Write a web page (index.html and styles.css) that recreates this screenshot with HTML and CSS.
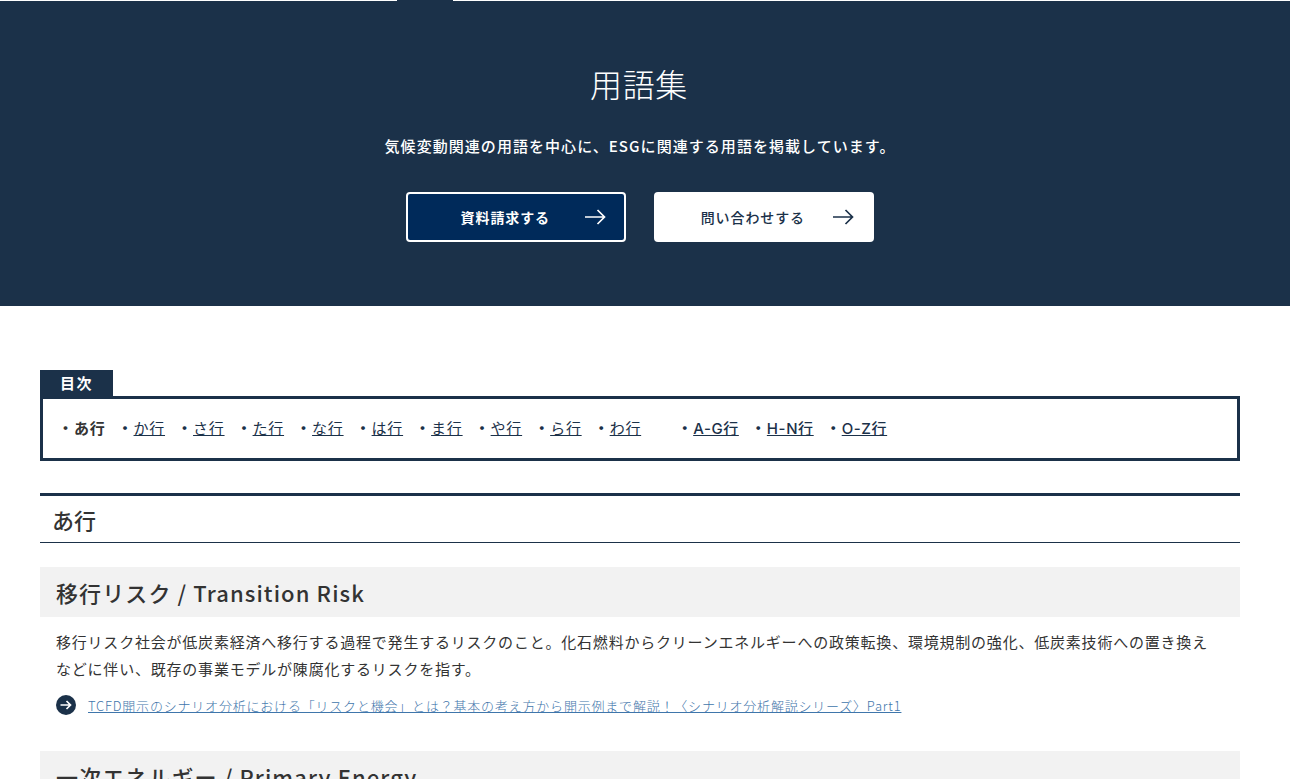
FILE: index.html
```html
<!DOCTYPE html>
<html lang="ja">
<head>
    <meta charset="UTF-8">
    <title>用語集</title>
    <link rel="stylesheet" href="styles.css">
</head>
<body>
    <div class="top-line">
        <span class="top-line-white"></span>
        <span class="top-line-gap"></span>
        <span class="top-line-white grow"></span>
    </div>

    <section class="hero">
        <h1>用語集</h1>
        <p class="hero-lead">気候変動関連の用語を中心に、ESGに関連する用語を掲載しています。</p>
        <div class="hero-buttons">
            <a href="#" class="btn btn-navy">
                <span class="btn-label">資料請求する</span>
                <svg class="btn-arrow" viewBox="0 0 21 16" width="21" height="16"><path d="M0 8H19.5M12.5 1L19.5 8L12.5 15" fill="none" stroke="currentColor" stroke-width="1.7"/></svg>
            </a>
            <a href="#" class="btn btn-white">
                <span class="btn-label">問い合わせする</span>
                <svg class="btn-arrow" viewBox="0 0 21 16" width="21" height="16"><path d="M0 8H19.5M12.5 1L19.5 8L12.5 15" fill="none" stroke="currentColor" stroke-width="1.7"/></svg>
            </a>
        </div>
    </section>

    <main class="content">
        <div class="toc">
            <div class="toc-title">目次</div>
            <div class="toc-box">
                <ul class="toc-list">
                    <li class="current">あ行</li>
                    <li><a href="#">か行</a></li>
                    <li><a href="#">さ行</a></li>
                    <li><a href="#">た行</a></li>
                    <li><a href="#">な行</a></li>
                    <li><a href="#">は行</a></li>
                    <li><a href="#">ま行</a></li>
                    <li><a href="#">や行</a></li>
                    <li><a href="#">ら行</a></li>
                    <li><a href="#">わ行</a></li>
                </ul>
                <ul class="toc-list toc-alpha">
                    <li><a href="#">A-G行</a></li>
                    <li><a href="#">H-N行</a></li>
                    <li><a href="#">O-Z行</a></li>
                </ul>
            </div>
        </div>

        <h2 class="group-title">あ行</h2>

        <article class="term">
            <h3>移行リスク / Transition Risk</h3>
            <p>移行リスク社会が低炭素経済へ移行する過程で発生するリスクのこと。化石燃料からクリーンエネルギーへの政策転換、環境規制の強化、低炭素技術への置き換えなどに伴い、既存の事業モデルが陳腐化するリスクを指す。</p>
            <a href="#" class="term-link">
                <svg class="term-link-icon" viewBox="0 0 20 20" width="20" height="20"><circle cx="10" cy="10" r="10" fill="#1b3149"/><path d="M4.5 10H14.5M10.5 6L14.5 10L10.5 14" fill="none" stroke="#fff" stroke-width="1.7"/></svg>
                <span>TCFD開示のシナリオ分析における「リスクと機会」とは？基本の考え方から開示例まで解説！〈シナリオ分析解説シリーズ〉Part1</span>
            </a>
        </article>

        <article class="term">
            <h3>一次エネルギー / Primary Energy</h3>
        </article>
    </main>
</body>
</html>
```

FILE: styles.css
```css
html, body {
    margin: 0;
    padding: 0;
    height: 100%;
    overflow: hidden;
    background: #fff;
    color: #333;
    font-family: "Noto Sans CJK JP", "Noto Sans", sans-serif;
}

a {
    color: inherit;
}

.top-line {
    display: flex;
    height: 1px;
}

.top-line-white {
    width: 397px;
    background: #fff;
}

.top-line-gap {
    width: 56px;
    background: #1b3149;
}

.top-line-white.grow {
    flex: 1;
}

.hero {
    background: #1b3149;
    color: #fff;
    height: 305px;
    box-sizing: border-box;
    padding: 59px 10px 0 0;
    text-align: center;
}

.hero h1 {
    margin: 0 2px 0 0;
    font-size: 32px;
    font-weight: 300;
    line-height: 46px;
    letter-spacing: 0.6px;
}

.hero-lead {
    margin: 28px 0 0;
    font-size: 15px;
    font-weight: 500;
    line-height: 24px;
    letter-spacing: 1.05px;
}

.hero-buttons {
    display: flex;
    justify-content: center;
    gap: 28px;
    margin-top: 34px;
}

.btn {
    display: flex;
    align-items: center;
    justify-content: flex-end;
    width: 220px;
    height: 50px;
    box-sizing: border-box;
    border-radius: 4px;
    text-decoration: none;
    font-size: 14px;
    font-weight: 700;
    letter-spacing: 0.9px;
    padding-right: 20px;
}

.btn-navy {
    background: #002a5a;
    border: 2px solid #fff;
    color: #fff;
    padding-right: 18px;
}

.btn-white {
    background: #fff;
    color: #1b3149;
    font-weight: 500;
}

.btn-label {
    margin-right: 35px;
}

.btn-white .btn-label {
    margin-right: 28px;
}

.btn-arrow {
    display: block;
}

.content {
    padding: 64px 50px 0 40px;
}

.toc-title {
    width: 73px;
    height: 26px;
    background: #1b3149;
    color: #fff;
    font-size: 15px;
    font-weight: 700;
    line-height: 26px;
    text-align: center;
    letter-spacing: 1.5px;
}

.toc-box {
    display: flex;
    align-items: center;
    gap: 40px;
    height: 65px;
    box-sizing: border-box;
    border: 3px solid #1b3149;
    padding: 0 0 3px 19px;
}

.toc-list {
    display: flex;
    gap: 16px;
    margin: 0;
    padding: 0;
    list-style: none;
    font-size: 15px;
    letter-spacing: 0.75px;
    color: #1b3149;
}

.toc-list li::before {
    content: "・";
    display: inline-block;
    width: 12px;
    text-indent: -4px;
    font-weight: 700;
}

.toc-list .current {
    font-weight: 700;
    color: #333;
}

.toc-alpha a {
    font-family: Inter, "Noto Sans CJK JP", sans-serif;
    font-weight: 500;
    letter-spacing: 0.6px;
}

.group-title {
    margin: 32px 0 0;
    height: 50px;
    box-sizing: border-box;
    border-top: 3px solid #1b3149;
    border-bottom: 1px solid #1b3149;
    padding-left: 12px;
    font-size: 22px;
    font-weight: 500;
    line-height: 46px;
}

.term {
    margin-top: 24px;
}

.term + .term {
    margin-top: 36px;
}

.term h3 {
    margin: 0;
    height: 50px;
    background: #f2f2f2;
    padding-left: 16px;
    font-size: 22px;
    font-weight: 500;
    line-height: 50px;
    letter-spacing: 1.1px;
}

.term p {
    margin: 11px 0 0;
    padding: 0 24px 0 16px;
    font-size: 15px;
    line-height: 27px;
    letter-spacing: 0.79px;
    font-weight: 400;
}

.term-link {
    display: flex;
    align-items: center;
    gap: 12px;
    margin: 13px 0 0 16px;
    font-size: 13px;
    font-weight: 300;
    color: #3f76ab;
    letter-spacing: 0.8px;
}

.term-link-icon {
    flex: none;
}
```
